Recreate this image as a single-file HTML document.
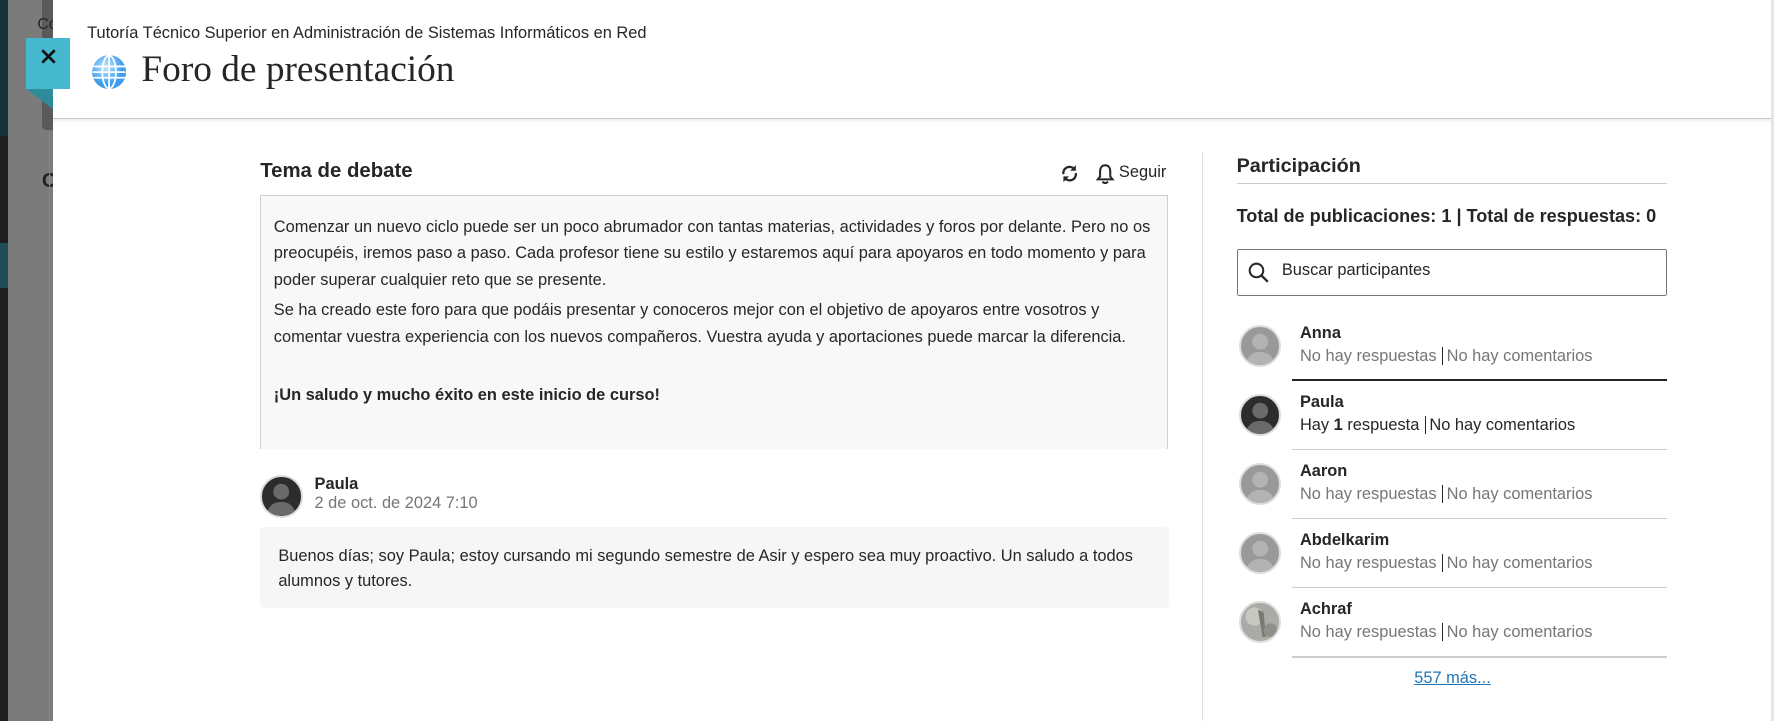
<!DOCTYPE html>
<html><head><meta charset="utf-8">
<style>
html,body{margin:0;padding:0;width:1774px;height:721px;overflow:hidden;background:#fff}
#w{zoom:1.13138;width:1568px;height:637px;position:relative;font-family:"Liberation Sans",sans-serif;color:#262626;overflow:hidden}
.a{position:absolute}
.av{position:absolute;width:34px;height:34px;border-radius:50%;border:2px solid #ddd;overflow:hidden;background:#999}
.av svg{display:block}
.nm{position:absolute;font-size:14.5px;font-weight:bold;color:#262626}
.sb{position:absolute;font-size:14.5px;color:#767676;white-space:nowrap}
.sep{border-left:1px solid #262626;margin:0 3px 0 5px}
.hr{position:absolute;left:1142px;width:331px;height:2px;background:#cdcdcd}
</style></head><body><div id="w">
<div class="a" style="left:0;top:0;width:47px;height:637px;background:#7b7b7b"></div>
<div class="a" style="left:0;top:0;width:7px;height:637px;background:#1e1e1e"></div>
<div class="a" style="left:0;top:0;width:7px;height:120px;background:#14323a"></div>
<div class="a" style="left:0;top:215px;width:7px;height:40px;background:#1f4d58"></div>
<div class="a" style="left:37px;top:0;width:10px;height:115px;background:#5a5a5a;border-radius:0 0 0 4px"></div>
<div class="a" style="left:33px;top:14px;font-size:14px;color:#222">Co</div>
<div class="a" style="left:37px;top:150px;font-size:18px;color:#222;font-weight:bold">C</div>
<div class="a" style="left:43px;top:117px;width:4px;height:520px;border-left:1px solid #8a8a8a"></div>
<div class="a" style="left:47px;top:0;width:1521px;height:637px;background:#fff"></div>
<div class="a" style="left:47px;top:104px;width:1521px;height:1px;background:#c8c8c8"></div>
<div class="a" style="left:47px;top:105px;width:1521px;height:4px;background:linear-gradient(#eee,#fff)"></div>
<div class="a" style="left:1565px;top:0;width:3px;height:637px;background:#e6e6e6"></div>
<div class="a" style="left:23px;top:79px;width:0;height:0;border-left:24px solid transparent;border-top:18px solid #2e8b99"></div>
<div class="a" style="left:23px;top:34px;width:39px;height:45px;background:#46b9cf"></div>
<svg class="a" style="left:35px;top:42px" width="15" height="15" viewBox="0 0 15 15"><path d="M2 2L13 13M13 2L2 13" stroke="#111" stroke-width="2.4"/></svg>
<div class="a" style="left:77px;top:21px;font-size:14.5px;color:#262626">Tutoría Técnico Superior en Administración de Sistemas Informáticos en Red</div>
<svg class="a" style="left:80px;top:48px" width="32" height="32" viewBox="0 0 32 32"><defs><radialGradient id="g" cx="0.4" cy="0.35"><stop offset="0" stop-color="#bfe6ff"/><stop offset="1" stop-color="#3c9cf0"/></radialGradient></defs><circle cx="16" cy="16" r="15" fill="url(#g)"/><g fill="none" stroke="#fff" stroke-width="1.6"><ellipse cx="16" cy="16" rx="6" ry="14.5"/><path d="M16 1.5V30.5M2 11H30M2 21H30M1.5 16H30.5"/></g></svg>
<div class="a" style="left:125px;top:42px;font-family:'Liberation Serif',serif;font-size:33px;color:#262626">Foro de presentación</div>
<div class="a" style="left:230px;top:141px;font-size:18px;font-weight:bold;color:#262626">Tema de debate</div>
<svg class="a" style="left:937px;top:145px" width="17" height="17" viewBox="0 0 17 17"><g fill="none" stroke="#262626" stroke-width="2"><path d="M3 9A5.5 5.5 0 0 1 13 5"/><path d="M14 8A5.5 5.5 0 0 1 4 12"/></g><path d="M14 1V6H9z" fill="#262626"/><path d="M3 16V11H8z" fill="#262626"/></svg>
<svg class="a" style="left:968px;top:144px" width="18" height="19" viewBox="0 0 18 19"><path d="M9 2C5.5 2 4.5 5 4.5 7.5V12L2.5 14.5H15.5L13.5 12V7.5C13.5 5 12.5 2 9 2Z" fill="none" stroke="#262626" stroke-width="1.8"/><path d="M6.5 16.5Q9 19 11.5 16.5" fill="none" stroke="#262626" stroke-width="1.8"/></svg>
<div class="a" style="left:989px;top:144px;font-size:14.5px">Seguir</div>
<div class="a" style="left:230px;top:172px;width:801px;height:224px;background:#f8f8f8;border:1px solid #cfcfcf;border-bottom:none"></div>
<div class="a" style="left:242px;top:189px;width:785px;font-size:14.5px;line-height:23.5px;color:#262626">
<div>Comenzar un nuevo ciclo puede ser un poco abrumador con tantas materias, actividades y foros por delante. Pero no os preocupéis, iremos paso a paso. Cada profesor tiene su estilo y estaremos aquí para apoyaros en todo momento y para poder superar cualquier reto que se presente.</div>
<div style="margin-top:3px">Se ha creado este foro para que podáis presentar y conoceros mejor con el objetivo de apoyaros entre vosotros y comentar vuestra experiencia con los nuevos compañeros. Vuestra ayuda y aportaciones puede marcar la diferencia.</div>
<div style="margin-top:28px;font-weight:bold">¡Un saludo y mucho éxito en este inicio de curso!</div>
</div>
<div class="av" style="left:230px;top:420px;background:#2c2c2c"><svg width="34" height="34" viewBox="0 0 34 34"><circle cx="17" cy="13" r="7" fill="#6a6a6a"/><path d="M4 34Q6 22 17 22Q28 22 30 34Z" fill="#6a6a6a"/></svg></div>
<div class="a" style="left:278px;top:420px;font-size:14.5px;font-weight:bold">Paula</div>
<div class="a" style="left:278px;top:437px;font-size:14.5px;color:#767676">2 de oct. de 2024 7:10</div>
<div class="a" style="left:230px;top:466px;width:803px;height:71px;background:#f6f6f6;border-radius:4px"></div>
<div class="a" style="left:246px;top:481px;width:780px;font-size:14.5px;line-height:22px">Buenos días; soy Paula; estoy cursando mi segundo semestre de Asir y espero sea muy proactivo. Un saludo a todos alumnos y tutores.</div>
<div class="a" style="left:1062px;top:135px;width:1px;height:502px;background:#ddd"></div>
<div class="a" style="left:1093px;top:137px;font-size:17.5px;font-weight:bold;color:#262626">Participación</div>
<div class="a" style="left:1093px;top:162px;width:380px;height:1px;background:#ccc"></div>
<div class="a" style="left:1093px;top:182px;font-size:16px;font-weight:bold">Total de publicaciones: 1 | Total de respuestas: 0</div>
<div class="a" style="left:1093px;top:220px;width:379px;height:40px;border:1px solid #767676;border-radius:2px"></div>
<svg class="a" style="left:1103px;top:232px" width="19" height="19" viewBox="0 0 19 19"><circle cx="7.5" cy="7.5" r="6" fill="none" stroke="#262626" stroke-width="1.8"/><path d="M12 12L17.5 17.5" stroke="#262626" stroke-width="2"/></svg>
<div class="a" style="left:1133px;top:231px;font-size:14.5px">Buscar participantes</div>
<div class="av" style="left:1095px;top:287px"><svg width="34" height="34" viewBox="0 0 34 34"><circle cx="17" cy="13" r="7" fill="#b3b3b3"/><path d="M4 34Q6 22 17 22Q28 22 30 34Z" fill="#b3b3b3"/></svg></div>
<div class="nm" style="left:1149px;top:286px">Anna</div>
<div class="sb" style="left:1149px;top:307px">No hay respuestas<span class="sep"></span>No hay comentarios</div>
<div class="a" style="left:1142px;top:335px;width:331px;height:2px;background:#262626"></div>
<div class="av" style="left:1095px;top:348px;background:#2c2c2c"><svg width="34" height="34" viewBox="0 0 34 34"><circle cx="17" cy="13" r="7" fill="#6a6a6a"/><path d="M4 34Q6 22 17 22Q28 22 30 34Z" fill="#6a6a6a"/></svg></div>
<div class="nm" style="left:1149px;top:347px">Paula</div>
<div class="sb" style="left:1149px;top:368px;color:#262626">Hay <b>1</b> respuesta<span class="sep"></span>No hay comentarios</div>
<div class="hr" style="top:397px;height:1px"></div>
<div class="av" style="left:1095px;top:409px"><svg width="34" height="34" viewBox="0 0 34 34"><circle cx="17" cy="13" r="7" fill="#b3b3b3"/><path d="M4 34Q6 22 17 22Q28 22 30 34Z" fill="#b3b3b3"/></svg></div>
<div class="nm" style="left:1149px;top:408px">Aaron</div>
<div class="sb" style="left:1149px;top:429px">No hay respuestas<span class="sep"></span>No hay comentarios</div>
<div class="hr" style="top:458px;height:1px"></div>
<div class="av" style="left:1095px;top:470px"><svg width="34" height="34" viewBox="0 0 34 34"><circle cx="17" cy="13" r="7" fill="#b3b3b3"/><path d="M4 34Q6 22 17 22Q28 22 30 34Z" fill="#b3b3b3"/></svg></div>
<div class="nm" style="left:1149px;top:469px">Abdelkarim</div>
<div class="sb" style="left:1149px;top:490px">No hay respuestas<span class="sep"></span>No hay comentarios</div>
<div class="hr" style="top:519px;height:1px"></div>
<div class="av" style="left:1095px;top:531px;background:#a9aca6"><svg width="34" height="34" viewBox="0 0 34 34"><circle cx="12" cy="12" r="8" fill="#c8c8c0"/><path d="M15 6L19 30L22 30L20 8Z" fill="#7a7a70"/><circle cx="26" cy="24" r="6" fill="#8d9088"/></svg></div>
<div class="nm" style="left:1149px;top:530px">Achraf</div>
<div class="sb" style="left:1149px;top:551px">No hay respuestas<span class="sep"></span>No hay comentarios</div>
<div class="hr" style="top:580px;height:2px"></div>
<div class="a" style="left:1250px;top:591px;font-size:14.5px;color:#1f74b8;text-decoration:underline">557 más...</div>
</div></body></html>
